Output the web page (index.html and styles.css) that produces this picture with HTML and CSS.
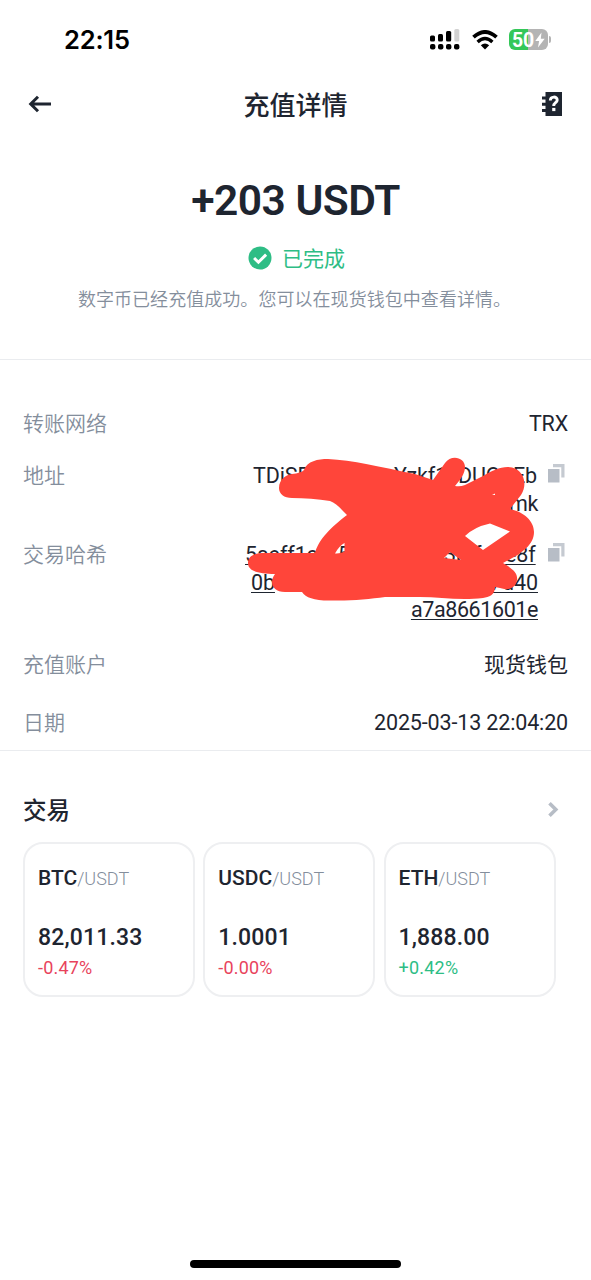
FILE: index.html
```html
<!DOCTYPE html>
<html lang="zh-CN">
<head>
<meta charset="utf-8">
<title>充值详情</title>
<link rel="stylesheet" href="styles.css">
</head>
<body>
<div class="screen">
  <header class="status">
    <span class="clock">22:15</span>
    <div class="status-icons">
      <svg class="signal" width="30" height="22" viewBox="0 0 30 22">
        <rect x="0" y="6.5" width="5" height="6" rx="1.5"/><rect x="8" y="5" width="5" height="7.5" rx="1.5"/><rect x="16" y="2" width="5.2" height="10.5" rx="1.5"/><rect x="24.3" y="0" width="5" height="12.5" rx="1.5" fill="#d2d2d2"/>
        <rect x="0" y="15" width="5.4" height="5.6" rx="2"/><rect x="8" y="15" width="5.4" height="5.6" rx="2"/><rect x="16" y="15" width="5.4" height="5.6" rx="2"/><rect x="24" y="15" width="5.4" height="5.6" rx="2"/>
      </svg>
      <svg class="wifi" width="26" height="20" viewBox="0 0 26 20">
        <path d="M1.500 7.200Q13-3.300 24.500 7.200" fill="none" stroke="#000" stroke-width="3.800"/>
        <path d="M5.600 11.900Q13 5.200 20.400 11.900" fill="none" stroke="#000" stroke-width="3.400"/>
        <path d="M8.800 15.300Q13 11.800 17.200 15.300L13 19.600Z"/>
      </svg>
      <div class="battery"><span class="level">50</span>
        <svg width="10" height="16" viewBox="0 0 10 15"><path d="M6.500 0L.3 8.500h3.800L3 15l6.700-8.800H5.800Z" fill="#fff"/></svg>
      </div>
      <span class="battery-tip"></span>
    </div>
  </header>
  <nav class="nav">
    <svg width="24" height="18" viewBox="0 0 24 18" fill="none" stroke="#1e2530" stroke-width="3"><path d="M2.600 9H23M10 1.700L2.700 9l7.300 7.300"/></svg>
    <h1 class="title">充值详情</h1>
    <svg width="22" height="24" viewBox="0 0 22 24">
      <path fill="#1e2530" d="M4.500 0H21v24H4.500v-4H1v-3h3.500v-3.200H1v-3h3.500V7.500H1v-3h3.500Z"/>
      <path d="M9.300 8.600c0-4.600 6.900-4.600 6.900-.6 0 2.700-3.500 2.700-3.500 5.900" fill="none" stroke="#fff" stroke-width="2.900"/>
      <rect x="11.200" y="15.900" width="3.200" height="3.200" fill="#fff"/>
    </svg>
  </nav>
  <section class="summary">
    <div class="amount">+203 USDT</div>
    <div class="state">
      <svg width="24" height="24" viewBox="0 0 24 24"><circle cx="12" cy="12" r="11.500" fill="#2ebd85"/><path d="M6.100 12l4.300 4.200 7.700-7.600" fill="none" stroke="#fff" stroke-width="3"/></svg>
      <span>已完成</span>
    </div>
    <p class="note">数字币已经充值成功。您可以在现货钱包中查看详情。</p>
  </section>
  <section class="details">
    <div class="row network"><span class="label">转账网络</span><span class="value">TRX</span></div>
    <div class="row address"><span class="label">地址</span>
      <div class="code"><div class="line l1"><span>TDiSE</span><span>Yzkf1</span><span>DUC</span><span>Eb</span></div><div class="line">mk</div></div>
      <svg class="copy" width="17" height="19" viewBox="0 0 17 19"><path d="M0 5h11.500v13.500H0Z" fill="#b7bdc6"/><path d="M5 0H16.500V13.500H13.300V3.200H5Z" fill="#c5cad1"/></svg>
    </div>
    <div class="row hash"><span class="label">交易哈希</span>
      <div class="code"><div class="line h1"><span class="u">5aeff1c</span><span>5</span><span>3b</span><span>f</span><span class="u">e8f</span></div><div class="line h2"><span class="u">0b</span><span class="u">7d40</span></div><div class="line"><span class="u">a7a8661601e</span></div></div>
      <svg class="copy" width="17" height="19" viewBox="0 0 17 19"><path d="M0 5h11.500v13.500H0Z" fill="#b7bdc6"/><path d="M5 0H16.500V13.500H13.300V3.200H5Z" fill="#c5cad1"/></svg>
    </div>
    <div class="row account"><span class="label">充值账户</span><span class="value">现货钱包</span></div>
    <div class="row date"><span class="label">日期</span><span class="value">2025-03-13 22:04:20</span></div>
    <svg class="scribble" width="290" height="148" viewBox="246 455 290 148">
      <path fill="#ff453a" fill-rule="evenodd" d="M279 488C279 479 286 475 292 474Q301 473 304 470C307 461 318 459 328 459C352 460 380 467 415 474L433 480L445 463C451 454 465 457 465 467C465 474 460 480 455 486Q460 487 465 485L483 476C494 469 507 464 516 469C525 474 527 486 521 495L510 509C524 512 534 521 534 532C534 546 519 555 503 563C513 569 518 573 517 580C516 588 508 591 500 588L495 587C495 595 489 597 483 598C460 601 440 597 420 597L385 597C370 599 350 601 333 600.500C315 601 306 598 302 592L285 592C272 592 269 582 275 574C258 574 248 571 248 563C248 555 256 553 265 553L315 553C318 542 327 530 347 515C341 509 336 503 330 501C318 499 304 498 292 498C284 498 279 494 279 488ZM335 553.500Q339 546 344.500 543V551.500Q340 554 335 553.500ZM465 536Q474 527 490 523.500L510 531.500L483 550ZM444 558L450 552L461 560ZM492 495l3-1.500v1.500Z"/>
    </svg>
  </section>
  <section class="trade">
    <div class="trade-head"><h2>交易</h2><svg class="chevron" width="11" height="15" viewBox="0 0 11 15"><path d="M1.500 1.300L7.800 7.500l-6.300 6.200" fill="none" stroke="#b7bdc6" stroke-width="3.600"/></svg></div>
    <div class="cards">
      <article class="card"><div class="pair"><b>BTC</b><span>/USDT</span></div><div class="price">82,011.33</div><div class="change down">-0.47%</div></article>
      <article class="card"><div class="pair"><b>USDC</b><span>/USDT</span></div><div class="price">1.0001</div><div class="change down">-0.00%</div></article>
      <article class="card"><div class="pair"><b>ETH</b><span>/USDT</span></div><div class="price">1,888.00</div><div class="change up">+0.42%</div></article>
    </div>
  </section>
  <div class="home"></div>
</div>
</body>
</html>
```
FILE: styles.css
```css
* { box-sizing: border-box; }
body { margin: 0; background: #fff; color: #1e2530; font-family: Roboto, "Noto Sans CJK SC", sans-serif; }
h1, h2, p { margin: 0; }
svg { display: block; flex: none; }
.screen { width: 591px; height: 1280px; display: flex; flex-direction: column; overflow: hidden; }
.status { height: 79px; display: flex; justify-content: space-between; align-items: center; padding: 0 40px 0 64px; color: #000; }
.clock { font: 600 25.500px/30px Inter, sans-serif; letter-spacing: -.2px; }
.status-icons { display: flex; align-items: center; }
.wifi { margin: 0 11px 0 12px; }
.battery { width: 39px; height: 21px; border-radius: 6px; background: linear-gradient(90deg, #34c759 50%, #b4b4b4 50%); display: flex; align-items: center; justify-content: center; gap: 1px; color: #fff; }
.level { font: 700 19.500px/21px Roboto, sans-serif; letter-spacing: -.2px; padding-top: 1px; }
.battery-tip { width: 2px; height: 7px; margin-left: 1px; border-radius: 0 2px 2px 0; background: #b4b4b4; }
.nav { height: 50px; display: flex; align-items: center; justify-content: space-between; padding: 0 28px; }
.title { font-size: 26px; line-height: 38px; font-weight: 500; padding: 3px 2px 0 0; }
.summary { height: 231px; padding-top: 44px; border-bottom: 1px solid #eaecef; display: flex; flex-direction: column; align-items: center; }
.amount { font-size: 42.500px; line-height: 56px; font-weight: 600; letter-spacing: -.5px; }
.state { display: flex; align-items: center; gap: 10px; margin-top: 14px; height: 30px; color: #2ebd85; font-size: 21px; line-height: 30px; padding-left: 2px; }
.state span { padding-top: 2px; }
.note { margin-top: 14px; font-size: 18px; line-height: 26px; letter-spacing: .05px; font-weight: 350; color: #848e9c; white-space: nowrap; padding-right: 2px; }
.details { position: relative; height: 391px; padding: 49px 23px 0; border-bottom: 1px solid #eaecef; font-size: 21.500px; }
.row { display: flex; align-items: flex-start; line-height: 30px; }
.label { font-size: 21px; color: #848e9c; font-weight: 350; flex: 1; }
.value { letter-spacing: -.15px; }
.network { height: 52px; }
.address { height: 79px; }
.hash { height: 110px; }
.account { height: 58px; }
.account .value { font-size: 21px; letter-spacing: 0; }
.code { width: 294px; line-height: 27.500px; text-align: right; margin-right: 10px; padding-top: 1px; }
.line { height: 27.500px; letter-spacing: -.4px; }
.l1, .h1, .h2 { display: grid; text-align: left; letter-spacing: -.1px; }
.l1 { grid-template-columns: 141px 64px 55px 25px; padding-left: 9px; width: 294px; }
.h1 { grid-template-columns: 93px 106px 30px 31px 33px; padding-left: 1px; }
.h2 { grid-template-columns: 1fr auto; padding-left: 7px; }
.u { text-decoration: underline; text-decoration-thickness: 1px; text-underline-offset: 2px; justify-self: start; }
.copy { margin: 3px 3px 0 0; }
.scribble { position: absolute; left: 246px; top: 95px; }
.trade { padding: 42px 23px 0; }
.trade-head { display: flex; align-items: center; justify-content: space-between; padding-right: 9px; }
.chevron { margin-bottom: 2px; }
h2 { font-size: 23.500px; line-height: 34px; font-weight: 500; padding-top: 1px; }
.cards { display: grid; grid-template-columns: repeat(3, 172px); gap: 8.300px; margin-top: 14px; }
.card { height: 155px; border: 2px solid #eeeff1; border-radius: 20px; padding: 20px 13px 0; }
.pair { line-height: 28px; height: 28px; white-space: nowrap; }
.pair b { font-size: 21px; font-weight: 500; }
.pair span { font-size: 18px; font-weight: 300; color: #848e9c; }
.price { margin-top: 32px; font-size: 23px; line-height: 28px; font-weight: 550; letter-spacing: .15px; }
.change { margin-top: 4px; font-size: 18px; line-height: 24px; letter-spacing: .2px; }
.down { color: #e8435c; }
.up { color: #2ebd85; }
.home { width: 211px; height: 8px; border-radius: 4px; background: #000; margin: auto auto 12px 190px; }
```
